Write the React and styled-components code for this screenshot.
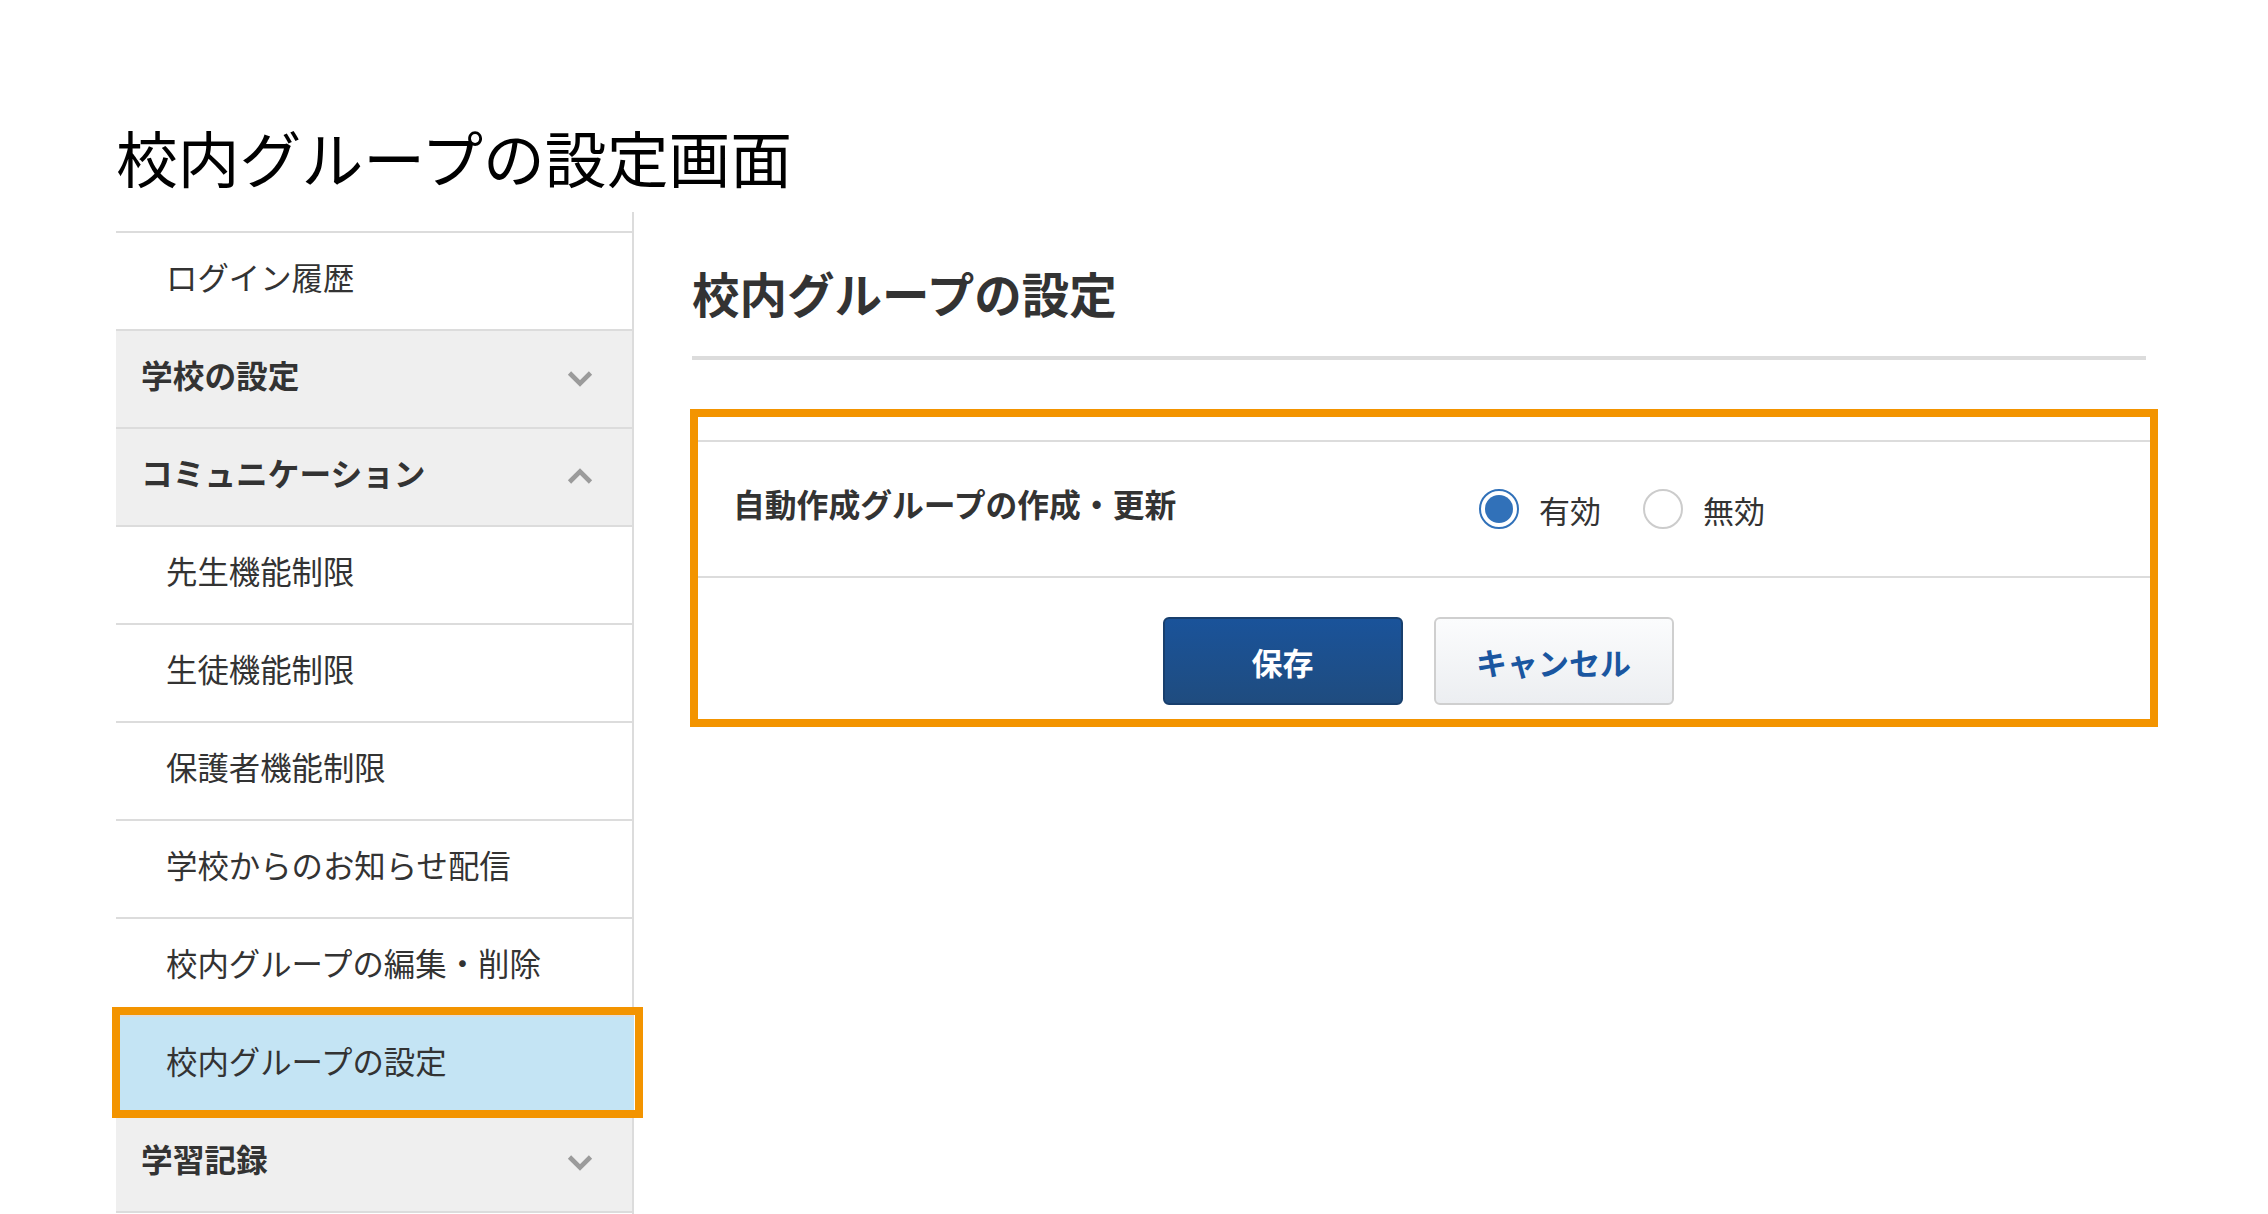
import React from "react";
import styled, { createGlobalStyle, css } from "styled-components";

const Global = createGlobalStyle`
  html, body { margin: 0; padding: 0; background: #fff; }
  body {
    font-family: "Noto Sans CJK JP", "Noto Sans", sans-serif;
    color: #333;
    overflow: hidden;
  }
  * { box-sizing: border-box; }
`;

const Page = styled.div`
  width: 2268px;
  height: 1214px;
  overflow: hidden;
  padding: 120px 0 0 116px;
`;

const PageTitle = styled.h1`
  margin: 0 0 19px;
  font-size: 61.8px;
  font-weight: 400;
  line-height: 73px;
  color: #000;
`;

const Layout = styled.div`
  display: flex;
  align-items: stretch;
  gap: 58px;
`;

const Sidebar = styled.nav`
  width: 518px;
  flex: none;
  border-right: 2px solid #dcdcdc;
  padding-top: 19px;
  min-height: 1100px;
`;

const MenuList = styled.ul`
  list-style: none;
  margin: 0;
  padding: 0;
  border-top: 2px solid #dcdcdc;
`;

const MenuItem = styled.li`
  position: relative;
  height: 98px;
  border-bottom: 2px solid #dcdcdc;
  display: flex;
  align-items: center;
  justify-content: space-between;
  color: #333;
  padding: 0 39px 0 ${(p) => (p.$header ? 25 : 50)}px;
  background: ${(p) => (p.$header ? "#efefef" : "#fff")};
  ${(p) =>
    p.$active &&
    css`
      background: #c4e4f4;
      margin-right: -2px;
      &::after {
        content: "";
        position: absolute;
        top: -10px;
        bottom: -5px;
        left: -4px;
        right: -9px;
        border: 8px solid #f39400;
        z-index: 2;
        pointer-events: none;
      }
    `}
`;

const MenuLabel = styled.span`
  font-size: ${(p) => (p.$header ? "31.7px" : "31.4px")};
  font-weight: ${(p) => (p.$header ? 700 : 400)};
  line-height: 1;
  margin-bottom: 9px;
`;

const ChevronSvg = styled.svg`
  display: block;
  flex: none;
  margin-bottom: ${(p) => (p.$up ? 3 : 0)}px;
`;

const Chevron = ({ up }) => (
  <ChevronSvg viewBox="0 0 26 16" width="26" height="16" $up={up}>
    <polyline
      points={up ? "2.5,14 13,3.5 23.5,14" : "2.5,2 13,12.5 23.5,2"}
      fill="none"
      stroke="#9b9b9b"
      strokeWidth="4.6"
    />
  </ChevronSvg>
);

const Main = styled.main`
  width: 1454px;
  flex: none;
`;

const Heading = styled.h2`
  margin: 53px 0 0;
  padding-bottom: 35px;
  border-bottom: 4px solid #dcdcdc;
  font-size: 47.5px;
  font-weight: 700;
  line-height: 56px;
  color: #333;
`;

const Frame = styled.section`
  margin: 49px -12px 0 -2px;
  border: 8px solid #f39400;
  padding-top: 23px;
`;

const FormRow = styled.div`
  display: grid;
  grid-template-columns: 781px 1fr;
  align-items: center;
  height: 138px;
  border-top: 2px solid #dcdcdc;
  border-bottom: 2px solid #dcdcdc;
`;

const FieldLabel = styled.div`
  padding: 0 0 10px 35px;
  font-size: 31.8px;
  font-weight: 700;
  line-height: 1;
  color: #333;
`;

const RadioGroup = styled.div`
  display: flex;
  align-items: center;
`;

const RadioOption = styled.label`
  display: flex;
  align-items: center;
  gap: 20px;
  margin-right: 42px;
  font-size: 31px;
  line-height: 1;
  color: #333;
`;

const RadioCircle = styled.span`
  width: 40px;
  height: 40px;
  border-radius: 50%;
  border: 2px solid ${(p) => (p.$checked ? "#3171b9" : "#cccccc")};
  display: flex;
  align-items: center;
  justify-content: center;
  background: #fff;
  &::after {
    content: "";
    width: 28px;
    height: 28px;
    border-radius: 50%;
    background: ${(p) => (p.$checked ? "#3171b9" : "transparent")};
  }
`;

const ButtonBar = styled.div`
  display: flex;
  justify-content: center;
  gap: 31px;
  padding: 39px 12px 14px 0;
`;

const Button = styled.button`
  width: 240px;
  height: 88px;
  border-radius: 6px;
  font-family: "Noto Sans CJK JP", sans-serif;
  font-size: 31px;
  font-weight: 700;
  line-height: 1;
  cursor: pointer;
  ${(p) =>
    p.$primary
      ? css`
          color: #fff;
          background: linear-gradient(#1a539a, #1f4c7f);
          border: 2px solid #183f6d;
        `
      : css`
          color: #1a56a0;
          background: linear-gradient(#fbfcfd, #eceef1);
          border: 2px solid #cfcfcf;
        `}
`;

const menu = [
  { label: "ログイン履歴" },
  { label: "学校の設定", header: true, chevron: "down" },
  { label: "コミュニケーション", header: true, chevron: "up" },
  { label: "先生機能制限" },
  { label: "生徒機能制限" },
  { label: "保護者機能制限" },
  { label: "学校からのお知らせ配信" },
  { label: "校内グループの編集・削除" },
  { label: "校内グループの設定", active: true },
  { label: "学習記録", header: true, chevron: "down" },
];

export default function App() {
  return (
    <>
      <Global />
      <Page>
        <PageTitle>校内グループの設定画面</PageTitle>
        <Layout>
          <Sidebar>
            <MenuList>
              {menu.map((m) => (
                <MenuItem key={m.label} $header={m.header} $active={m.active}>
                  <MenuLabel $header={m.header}>{m.label}</MenuLabel>
                  {m.chevron && <Chevron up={m.chevron === "up"} />}
                </MenuItem>
              ))}
            </MenuList>
          </Sidebar>
          <Main>
            <Heading>校内グループの設定</Heading>
            <Frame>
              <FormRow>
                <FieldLabel>自動作成グループの作成・更新</FieldLabel>
                <RadioGroup>
                  <RadioOption>
                    <RadioCircle $checked />
                    有効
                  </RadioOption>
                  <RadioOption>
                    <RadioCircle />
                    無効
                  </RadioOption>
                </RadioGroup>
              </FormRow>
              <ButtonBar>
                <Button $primary>保存</Button>
                <Button>キャンセル</Button>
              </ButtonBar>
            </Frame>
          </Main>
        </Layout>
      </Page>
    </>
  );
}
